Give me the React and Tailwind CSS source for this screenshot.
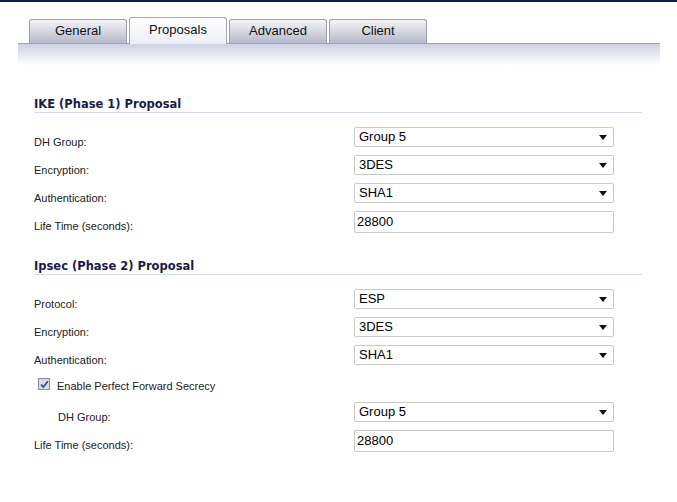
import React from "react";

const tabs = ["General", "Proposals", "Advanced", "Client"];

const Arrow = () => (
  <svg width="8" height="5" viewBox="0 0 8 5" className="shrink-0">
    <path d="M0 0h8L4 5z" fill="#111" />
  </svg>
);

const Select = ({ value }) => (
  <div className="flex h-[20px] w-[260px] items-center justify-between rounded-[2px] border border-[#c9c9c9] bg-white pl-[4px] pr-[6px] text-[13px] text-black">
    <span>{value}</span>
    <Arrow />
  </div>
);

const Input = ({ value }) => (
  <div className="flex h-[22px] w-[260px] items-center rounded-[2px] border border-[#c9c9c9] bg-white pl-[2px] text-[13px] text-black">
    {value}
  </div>
);

const Row = ({ label, indent, children }) => (
  <div className="flex h-[28px] items-start">
    <div
      className={`w-[320px] pt-[12px] text-[11px] leading-[14px] text-[#222] ${
        indent ? "pl-[24px]" : ""
      }`}
    >
      {label}
    </div>
    <div className="pt-[4px]">{children}</div>
  </div>
);

const Heading = ({ children }) => (
  <div className="mr-[35px] border-b border-[#d3dde6] pb-[1px] font-['DejaVu_Sans',sans-serif] text-[11.5px] font-bold leading-[14px] text-[#1b1b45]">
    {children}
  </div>
);

export default function App() {
  return (
    <div className="h-[502px] w-[677px] border-t-2 border-[#0c1a5a] bg-white font-['Liberation_Sans',Arial,sans-serif]">
      {/* tab strip */}
      <div className="ml-[29px] mt-[15px] flex h-[26px] items-end gap-[2px]">
        {tabs.map((t) =>
          t === "Proposals" ? (
            <div
              key={t}
              className="relative z-10 -mb-px flex h-[27px] w-[98px] items-center justify-center rounded-t-[3px] border border-b-0 border-[#a5a5b3] bg-gradient-to-b from-white to-[#eceef5] pb-[2px] text-[13px] text-[#111]"
            >
              {t}
            </div>
          ) : (
            <div
              key={t}
              className="flex h-[24px] w-[98px] items-center justify-center rounded-t-[3px] border border-b-0 border-[#9d9dab] bg-gradient-to-b from-[#f5f5f5] to-[#b5b8cb] pb-[2px] text-[13px] text-[#111]"
            >
              {t}
            </div>
          )
        )}
      </div>
      <div className="ml-[18px] h-[22px] w-[642px] border-t border-[#a0a0b0] bg-gradient-to-b from-[#cdd1e2] to-white" />

      <div className="pl-[34px] pt-[32px]">
        <Heading>IKE (Phase 1) Proposal</Heading>
        <div className="mt-[10px]">
          <Row label="DH Group:">
            <Select value="Group 5" />
          </Row>
          <Row label="Encryption:">
            <Select value="3DES" />
          </Row>
          <Row label="Authentication:">
            <Select value="SHA1" />
          </Row>
          <Row label="Life Time (seconds):">
            <Input value="28800" />
          </Row>
        </div>

        <div className="mt-[24px]">
          <Heading>Ipsec (Phase 2) Proposal</Heading>
        </div>
        <div className="mt-[10px]">
          <Row label="Protocol:">
            <Select value="ESP" />
          </Row>
          <Row label="Encryption:">
            <Select value="3DES" />
          </Row>
          <Row label="Authentication:">
            <Select value="SHA1" />
          </Row>
          <div className="flex h-[29px] items-start pl-[4px] pt-[9px]">
            <span className="flex h-[12px] w-[12px] items-center justify-center border border-[#8d8d95] bg-[#dcdce0]">
              <svg width="9" height="9" viewBox="0 0 9 9">
                <path
                  d="M1 4.5l2.2 2.5L8 1.2"
                  fill="none"
                  stroke="#3a4fa0"
                  strokeWidth="1.8"
                />
              </svg>
            </span>
            <span className="ml-[7px] mt-[1px] text-[11px] leading-[14px] text-[#222]">
              Enable Perfect Forward Secrecy
            </span>
          </div>
          <Row label="DH Group:" indent>
            <Select value="Group 5" />
          </Row>
          <Row label="Life Time (seconds):">
            <Input value="28800" />
          </Row>
        </div>
      </div>
    </div>
  );
}
